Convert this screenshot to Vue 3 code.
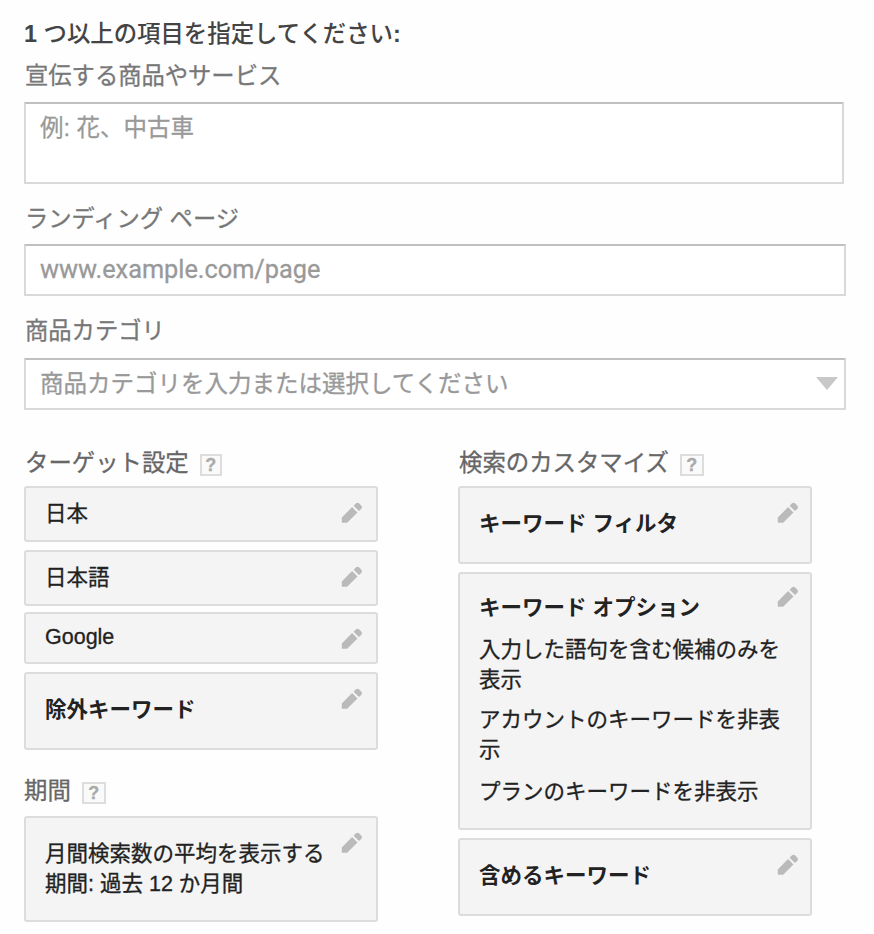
<template>
  <div class="planner">
    <h1 class="title">1 <span>つ以上の項目を指定してください</span>:</h1>

    <div class="field product">
      <label for="product">宣伝する商品やサービス</label>
      <div id="product" class="box tall">例: 花、中古車</div>
    </div>
    <div class="field landing">
      <label for="landing">ランディング ページ</label>
      <div id="landing" class="box latin">www.example.com/page</div>
    </div>
    <div class="field category">
      <label for="category">商品カテゴリ</label>
      <div id="category" class="box select">
        商品カテゴリを入力または選択してください
        <svg class="arrow" width="22" height="13" viewBox="0 0 22 13">
          <path d="M0 0h22L11 13z" fill="#c8c8c8" />
        </svg>
      </div>
    </div>

    <div class="columns">
      <div v-for="(column, i) in columns" :key="i" class="column">
        <section v-for="group in column" :key="group.title" class="group">
          <h2>
            <span>{{ group.title }}</span>
            <span class="help" :class="{ narrow: group.narrow }">?</span>
          </h2>
          <div
            v-for="(card, n) in group.cards"
            :key="n"
            class="card"
            :class="card.type"
          >
            <strong v-if="card.name">{{ card.name }}</strong>
            <p v-for="line in card.lines" :key="line">{{ line }}</p>
            <svg class="pencil" width="22" height="22" viewBox="0 0 22 22">
              <path
                d="M0.8 15.4 11.1 5.1l5.4 5.4L6.2 20.8H0.8z M12.6 3.7l2.4-2.4q1.5-1.3 3 0l2.4 2.4q1.3 1.5 0 3L18 9.1z"
                fill="#bababa"
              />
            </svg>
          </div>
        </section>
      </div>
    </div>
  </div>
</template>

<script setup>
const columns = [
  [
    {
      title: "ターゲット設定",
      narrow: true,
      cards: [
        { type: "single", lines: ["日本"] },
        { type: "single", lines: ["日本語"] },
        { type: "single network", lines: ["Google"] },
        { type: "named", name: "除外キーワード" },
      ],
    },
    {
      title: "期間",
      cards: [
        {
          type: "period",
          lines: ["月間検索数の平均を表示する", "期間: 過去 12 か月間"],
        },
      ],
    },
  ],
  [
    {
      title: "検索のカスタマイズ",
      cards: [
        { type: "named", name: "キーワード フィルタ" },
        {
          type: "options",
          name: "キーワード オプション",
          lines: [
            "入力した語句を含む候補のみを表示",
            "アカウントのキーワードを非表示",
            "プランのキーワードを非表示",
          ],
        },
        { type: "named", name: "含めるキーワード" },
      ],
    },
  ],
];
</script>

<style>
body {
  margin: 0;
  background: #fefefe;
}
</style>

<style scoped>
.planner {
  box-sizing: border-box;
  height: 934px;
  padding: 12px 28px 0 24px;
  overflow: hidden;
  font-family: "Liberation Sans", "Noto Sans CJK JP", sans-serif;
  font-size: 23.5px;
  color: #222;
  -webkit-text-stroke: 0.3px;
}
.title {
  margin: 0;
  height: 42px;
  line-height: 44px;
  font-size: 23.4px;
  font-weight: bold;
  color: #444;
  white-space: nowrap;
  -webkit-text-stroke: 0;
}
.title span {
  font-weight: 500;
}
label {
  display: block;
  height: 42px;
  padding-left: 1px;
  line-height: 44px;
  font-size: 23.3px;
  color: #777;
}
.box {
  box-sizing: border-box;
  height: 52px;
  padding: 0 14px;
  border: 2px solid #d9d9d9;
  border-top-color: #c0c0c0;
  background: #fff;
  line-height: 48px;
  color: #999;
}
.product .box {
  height: 82px;
  width: 820px;
  margin-top: 6px;
}
.landing {
  padding-top: 13px;
}
.landing .box {
  margin-top: 5px;
}
.category {
  padding-top: 13px;
}
.category .box {
  margin-top: 7px;
}
.latin {
  font-family: Roboto, sans-serif;
  font-size: 25.3px;
}
.select {
  display: flex;
  justify-content: space-between;
  padding-right: 6px;
}
.arrow {
  margin-top: 17px;
}
.columns {
  display: flex;
  gap: 80px;
  margin-top: 32px;
}
.column {
  width: 354px;
}
h2 {
  display: flex;
  height: 42px;
  margin: 0 0 2px;
  padding-left: 1px;
  font-size: 23.4px;
  font-weight: normal;
  line-height: 43px;
  color: #666;
}
.group + .group {
  margin-top: 20px;
}
.group + .group h2 {
  margin-bottom: 4px;
  padding-left: 0;
}
.help {
  box-sizing: border-box;
  width: 24px;
  height: 22px;
  margin: 12px 0 0 11px;
  border: 2px solid #ddd;
  background: #fafafa;
  font-size: 18px;
  font-weight: bold;
  line-height: 19px;
  text-align: center;
  color: #aaa;
}
.help.narrow {
  width: 22px;
}
.card {
  position: relative;
  box-sizing: border-box;
  padding: 14px 29px 0 19px;
  border: 2px solid #dcdcdc;
  border-radius: 3px;
  background: #f4f4f4;
  font-size: 21.5px;
  line-height: 30px;
}
.card + .card {
  margin-top: 8px;
}
.pencil {
  position: absolute;
  top: 14px;
  right: 13px;
}
.column:last-child .pencil {
  right: 11px;
}
.card strong {
  display: block;
  margin-top: 7px;
  -webkit-text-stroke: 0;
}
.card p {
  margin: 0;
}
.single {
  height: 56px;
}
.card.single p {
  margin-top: -3px;
}
.card.network {
  height: 52px;
  margin-top: 6px;
}
.card.network p {
  margin-top: -6px;
}
.named {
  height: 78px;
}
.period {
  height: 106px;
  padding-top: 21px;
}
.options {
  height: 258px;
  padding-top: 12px;
}
.options .pencil {
  top: 12px;
}
.options p {
  margin-top: 12px;
}
.options p + p {
  margin-top: 10px;
}
.options p + p + p {
  margin-top: 12px;
}
</style>
